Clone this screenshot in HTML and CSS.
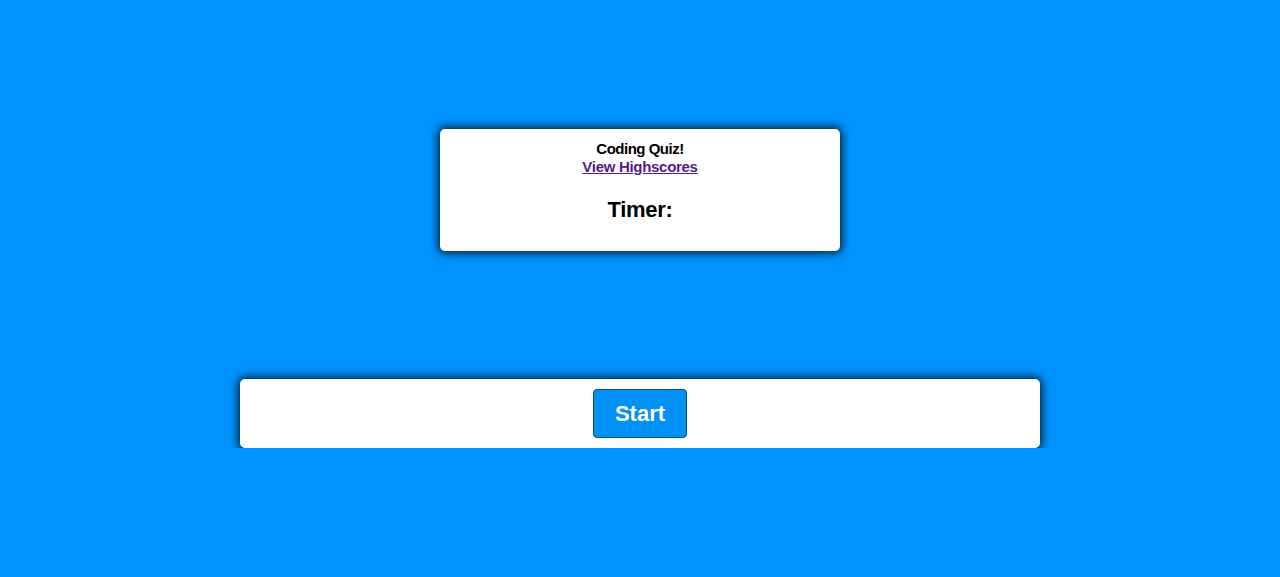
FILE: index.html
```html
<!DOCTYPE html>
<html>
<head>
<meta charset="utf-8">
<link rel="stylesheet" href="styles.css">
</head>
<body>
<div class="page">
  <header class="card top">
    <div class="title">Coding Quiz!</div>
    <a class="link" href="#">View Highscores</a>
    <h2 class="timer">Timer:</h2>
  </header>
  <main class="card bottom">
    <button class="start">Start</button>
  </main>
</div>
</body>
</html>
```
FILE: styles.css
```css
html, body {
  margin: 0;
  padding: 0;
  background: #0093ff;
  font-family: "Liberation Sans", Arial, sans-serif;
}
.page {
  display: flex;
  flex-direction: column;
  align-items: center;
  padding-top: 129px;
}
.card {
  background: #fff;
  border-radius: 5px;
  box-shadow: 0 0 10px 2px rgba(0, 0, 0, 0.8);
  box-sizing: border-box;
}
.top {
  width: 400px;
  height: 122px;
  display: flex;
  flex-direction: column;
  align-items: center;
  padding-top: 11px;
}
.title {
  font-weight: bold;
  font-size: 15px;
  line-height: 18px;
  letter-spacing: -0.5px;
  color: #000;
}
.link {
  font-weight: bold;
  font-size: 15px;
  line-height: 18px;
  letter-spacing: -0.3px;
  color: #551a8b;
  text-decoration: underline;
}
.timer {
  margin: 20px 0 0;
  font-size: 22px;
  line-height: 28px;
  letter-spacing: -0.3px;
  font-weight: bold;
  color: #000;
}
.bottom {
  margin-top: 128px;
  width: 800px;
  height: 69px;
  display: flex;
  justify-content: center;
  align-items: flex-start;
  padding-top: 10px;
}
.start {
  width: 94px;
  height: 49px;
  background: #0091f6;
  border: 1px solid #0a4f8a;
  border-radius: 4px;
  color: #fff;
  font-family: "Liberation Sans", Arial, sans-serif;
  font-weight: bold;
  font-size: 22px;
  cursor: pointer;
}
```
